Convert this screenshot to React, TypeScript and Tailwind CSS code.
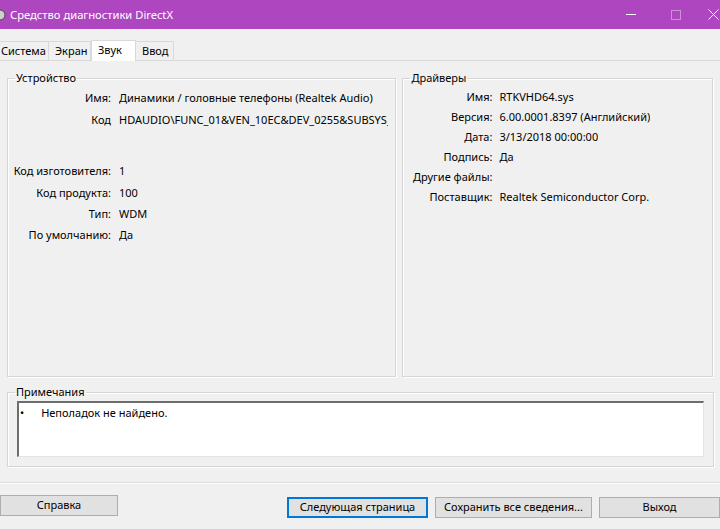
import React from 'react';

const font = { fontFamily: '"Noto Sans", "Open Sans", sans-serif' };

type Row = { label: string; value: string };

const deviceTop: Row[] = [
  { label: 'Имя:', value: 'Динамики / головные телефоны (Realtek Audio)' },
  { label: 'Код', value: 'HDAUDIO\\FUNC_01&VEN_10EC&DEV_0255&SUBSYS_10EC0255' },
];

const deviceBottom: Row[] = [
  { label: 'Код изготовителя:', value: '1' },
  { label: 'Код продукта:', value: '100' },
  { label: 'Тип:', value: 'WDM' },
  { label: 'По умолчанию:', value: 'Да' },
];

const drivers: Row[] = [
  { label: 'Имя:', value: 'RTKVHD64.sys' },
  { label: 'Версия:', value: '6.00.0001.8397 (Английский)' },
  { label: 'Дата:', value: '3/13/2018 00:00:00' },
  { label: 'Подпись:', value: 'Да' },
  { label: 'Другие файлы:', value: '' },
  { label: 'Поставщик:', value: 'Realtek Semiconductor Corp.' },
];

const tabs = ['Система', 'Экран', 'Звук', 'Ввод'];
const tabWidths = ['w-[49px]', 'w-[42px]', 'w-[45px]', 'w-[38px]'];

// Etched group box, drawn with fieldset + legend so the line runs through the caption
const GroupBox = ({ title, className, children }: { title: string; className: string; children?: React.ReactNode }) => (
  <fieldset className={`border border-[#d5d5d5] shadow-[inset_1px_1px_0_#ffffff,1px_1px_0_#ffffff] ${className}`}>
    <legend className="ml-[7px] px-[1px] h-[16px] leading-[16px] text-[11px] text-black">{title}</legend>
    {children}
  </fieldset>
);

const InfoRow = ({ row, labelW, gap, h }: { row: Row; labelW: string; gap: string; h: string }) => (
  <div className={`flex items-center ${h} text-[11px] text-black whitespace-nowrap`}>
    <span className={`${labelW} shrink-0 text-right`}>{row.label}</span>
    <span className={`${gap} overflow-hidden`}>{row.value}</span>
  </div>
);

const Button = ({ label, w, primary }: { label: string; w: string; primary?: boolean }) => (
  <button
    className={`${w} h-[21px] text-[11px] text-black bg-[#e1e1e1] border ${
      primary ? 'border-[#0078d7] shadow-[inset_0_0_0_1px_#0078d7]' : 'border-[#adadad]'
    }`}
  >
    {label}
  </button>
);

export default function App() {
  return (
    <div className="w-[720px] h-[529px] bg-[#f0f0f0] overflow-hidden flex flex-col" style={font}>
      {/* Title bar */}
      <div className="h-[29px] shrink-0 bg-[#ad46bf] flex items-center text-white">
        <svg width="6" height="12" viewBox="0 0 6 12" className="shrink-0">
          <circle cx="0" cy="6" r="5" fill="#cfcfcf" stroke="#4a4a4a" strokeWidth="1" />
        </svg>
        <span className="ml-[4px] text-[11.2px] leading-none">Средство диагностики DirectX</span>
        <div className="ml-auto flex items-center h-full">
          <div className="w-[45px] h-full flex items-center justify-center">
            <div className="w-[10px] h-px bg-white" />
          </div>
          <div className="w-[45px] h-full flex items-center justify-center">
            <div className="w-[10px] h-[10px] border border-white/40" />
          </div>
          <div className="w-[22px] h-full flex items-center justify-end pr-[1px]">
            <svg width="11" height="11" viewBox="0 0 11 11">
              <path d="M0.5 0.5 L10.5 10.5 M10.5 0.5 L0.5 10.5" stroke="#fff" strokeWidth="1" />
            </svg>
          </div>
        </div>
      </div>

      {/* Tabs */}
      <div className="mt-[11px] h-[21px] shrink-0 flex items-end border-b border-[#d9d9d9]">
        {tabs.map((t, i) =>
          i === 2 ? (
            <div
              key={t}
              className={`${tabWidths[i]} h-[21px] -mb-px bg-white border border-b-0 border-[#d9d9d9] text-[11px] text-black leading-[18px] pl-[6px]`}
            >
              {t}
            </div>
          ) : (
            <div
              key={t}
              className={`${tabWidths[i]} h-[19px] bg-[#f0f0f0] border-r border-t border-[#d9d9d9] text-[11px] text-black leading-[18px] ${
                i === 0 ? 'pl-[1px]' : 'pl-[6px]'
              }`}
            >
              {t}
            </div>
          )
        )}
      </div>

      {/* Page content */}
      <div className="flex flex-col px-[7px]">
        <div className="mt-[9px] flex gap-[6px]">
          <GroupBox title="Устройство" className="w-[390px] h-[307px]">
            <div className="pt-[1px]">
              {deviceTop.map(r => (
                <InfoRow key={r.label} row={r} labelW="w-[103px]" gap="ml-[8px] w-[269px]" h="h-[22px]" />
              ))}
              <div className="h-[30px]" />
              {deviceBottom.map(r => (
                <InfoRow key={r.label} row={r} labelW="w-[103px]" gap="ml-[8px] w-[269px]" h="h-[21.3px]" />
              ))}
            </div>
          </GroupBox>
          <GroupBox title="Драйверы" className="w-[311px] h-[307px]">
            <div className="pt-[1px]">
              {drivers.map(r => (
                <InfoRow key={r.label} row={r} labelW="w-[89px]" gap="ml-[7px]" h="h-[20px]" />
              ))}
            </div>
          </GroupBox>
        </div>

        <GroupBox title="Примечания" className="mt-[7px] w-[707px] h-[83px]">
          <div className="ml-[9px] mt-[1px] w-[687px] h-[56px] bg-white border-t-2 border-l-2 border-t-[#6d6d6d] border-l-[#6d6d6d] border-r border-b border-r-[#e3e3e3] border-b-[#e3e3e3] flex items-start text-[11px] text-black">
            <span className="ml-[1px] mt-[2px] leading-[16px]">•</span>
            <span className="ml-[17px] mt-[2px] leading-[16px]">Неполадок не найдено.</span>
          </div>
        </GroupBox>
      </div>

      {/* Separator */}
      <div className="mt-[15px] h-px bg-[#dcdcdc] shadow-[0_1px_0_#ffffff]" />

      {/* Buttons */}
      <div className="mt-[10px] flex items-center">
        <Button label="Справка" w="w-[118px]" />
        <div className="ml-[169px]">
          <Button label="Следующая страница" w="w-[141px]" primary />
        </div>
        <div className="ml-[7px]">
          <Button label="Сохранить все сведения..." w="w-[157px]" />
        </div>
        <div className="ml-[7px]">
          <Button label="Выход" w="w-[121px]" />
        </div>
      </div>
    </div>
  );
}
